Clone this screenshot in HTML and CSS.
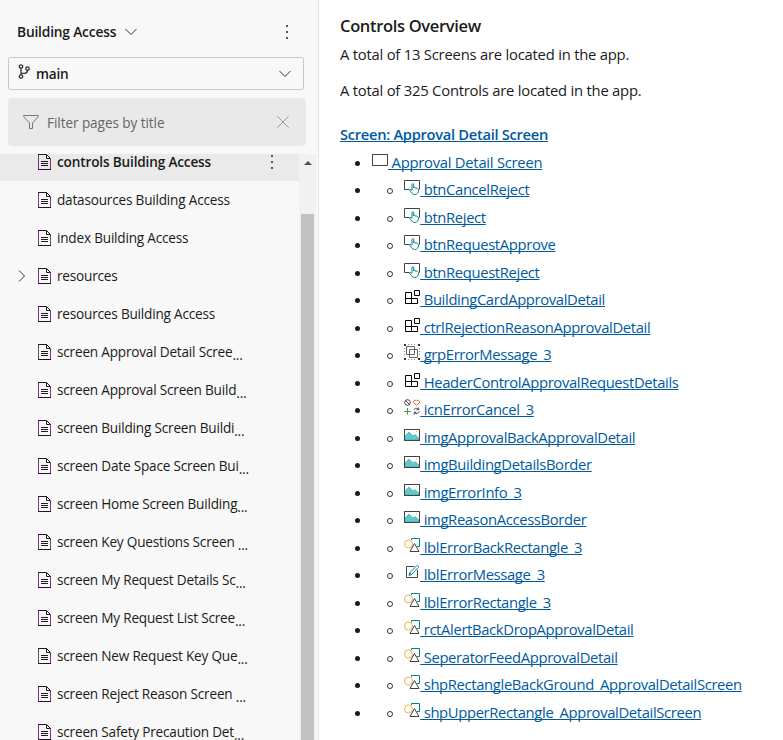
FILE: index.html
```html
<!DOCTYPE html>
<html lang="en">
<head>
<meta charset="utf-8">
<title>Controls Overview</title>
<link rel="stylesheet" href="styles.css">
</head>
<body>
<svg class="defs" aria-hidden="true">
  <symbol id="doc" viewBox="0 0 14 16"><path class="doc-edge" d="M1.500 .5V15.500M13.500 5V15.500"/><path class="doc-line" d="M1 .5H9.500L13.500 4.500H9.500V.5M1 15.500H14M4 7.500H11M4 9.500H11M4 11.500H11"/></symbol>
  <symbol id="chevron" viewBox="0 0 12 8"><path d="M.5 1L6 6.500L11.500 1"/></symbol>
  <symbol id="screen" viewBox="0 0 16 16"><path class="ink" d="M.5 2.500H15.500V13.500H.5Z"/></symbol>
  <symbol id="button" viewBox="0 0 16 16"><path class="ink" d="M5.500 10.500H.5V1.500H15.500V10.500"/><path class="teal" fill="#fff" d="M8 11V5.600C8 4.300 9.700 4.300 9.700 5.600V9V8.500C10.500 8 11.500 8.300 11.500 9.200C12.300 8.600 13.300 9 13.300 9.800C14 9.500 14.700 9.900 14.600 10.700C14.500 13.500 13.400 15.500 10.700 15.500C8.300 15.500 7.300 13.500 5.700 11.300C5.300 10.500 6.600 9.800 8 11.500"/></symbol>
  <symbol id="component" viewBox="0 0 16 16"><path class="black" d="M1.500 3.500H7.500V9.500H13.500V14.500H1.500ZM1.500 9.500H7.500V14.500M10.500 1.500H15.500V6.500H10.500Z"/></symbol>
  <symbol id="group" viewBox="0 0 16 16"><path class="gray" d="M2.500 2.500H10.500V10.500H2.500ZM5.500 5.500H13.500V13.500H5.500Z"/><path class="dots" d="M.5 4V13M15.500 4V13M4 .5H13M4 15.500H13"/><path class="solid" d="M0 0H2V2H0ZM14 0H16V2H14ZM0 14H2V16H0ZM14 14H16V16H14Z"/></symbol>
  <symbol id="icons" viewBox="0 0 16 16"><circle class="ink" cx="3.500" cy="3.500" r="2.800"/><path class="ink" d="M1.500 1.500L5.500 5.500M10 11C10.500 9 13.500 8.500 14.700 10.500V8.500M14.700 10.700H12.500M15.300 12.500C14.500 15 11.500 15.300 10.300 13.300V15.500M10.300 13.200H12.500"/><path class="red" d="M12.500 6.400L9.600 3.500C8.900 1.600 11.200.3 12.500 2.100C13.800.3 16.100 1.600 15.400 3.500Z"/><path class="green" d="M3.500 9V15.500M.3 12.500H6.800"/></symbol>
  <symbol id="image" viewBox="0 0 16 16"><path fill="#fff" d="M.5 2.500H15.500V13.500H.5Z"/><path class="hills" d="M1 9L5 5L9 9L11 7.500L15 11V13H1Z"/><path class="sun" d="M12 4H13V5H12Z"/><path class="ink" d="M.5 2.500H15.500V13.500H.5Z"/></symbol>
  <symbol id="shape" viewBox="0 0 16 16"><path class="teal" d="M7.500 3V1.500H15.500V9.500H13"/><circle class="orange" cx="4.500" cy="7" r="4"/><path class="ink" fill="#fff" d="M10.500 6.500L15 14.500H6Z"/></symbol>
  <symbol id="label" viewBox="0 0 16 16"><path class="ink" d="M10 2.500H2.500V13.500H13.500V6"/><path class="teal" fill="#fff" d="M5 11.500L5.700 8.800L12.800 1.600C13.700.9 15.300 2.300 14.500 3.300L7.500 10.500ZM6 9L7.300 10.300"/></symbol>
</svg>

<div class="app">
  <aside class="sidebar">
    <header class="wiki">
      <span class="wiki-name">Building Access</span>
      <svg class="chevron"><use href="#chevron"/></svg>
      <span class="more"><i></i><i></i><i></i></span>
    </header>
    <div class="branch">
      <svg class="branch-icon" viewBox="0 0 12 15"><circle cx="3" cy="2.500" r="1.700"/><circle cx="3" cy="12.500" r="1.700"/><circle cx="9.500" cy="4.500" r="1.700"/><path d="M3 4.200V10.800M3 9.300H6.500C8.500 9.300 9.500 8.500 9.500 6.200"/></svg>
      <span class="branch-name">main</span>
      <svg class="chevron"><use href="#chevron"/></svg>
    </div>
    <div class="filter">
      <svg class="funnel" viewBox="0 0 16 15"><path d="M.7.500H15.300V1.800L9.500 8V13.500H6.500V8L.7 1.800Z"/></svg>
      <span class="filter-text">Filter pages by title</span>
      <svg class="clear" viewBox="0 0 12 12"><path d="M.3.300L11.700 11.700M11.700.300L.3 11.700"/></svg>
    </div>
    <div class="tree">
      <ul class="pages">
        <li class="page active"><svg class="doc"><use href="#doc"/></svg><span class="title">controls Building Access</span><span class="more"><i></i><i></i><i></i></span></li>
        <li class="page"><svg class="doc"><use href="#doc"/></svg><span class="title">datasources Building Access</span></li>
        <li class="page"><svg class="doc"><use href="#doc"/></svg><span class="title">index Building Access</span></li>
        <li class="page parent"><svg class="expand" viewBox="0 0 8 12"><path d="M1 .5L6.500 6L1 11.500"/></svg><svg class="doc"><use href="#doc"/></svg><span class="title">resources</span></li>
        <li class="page"><svg class="doc"><use href="#doc"/></svg><span class="title">resources Building Access</span></li>
        <li class="page"><svg class="doc"><use href="#doc"/></svg><span class="title">screen Approval Detail Scree<span class="cut">...</span></span></li>
        <li class="page"><svg class="doc"><use href="#doc"/></svg><span class="title">screen Approval Screen Build<span class="cut">...</span></span></li>
        <li class="page"><svg class="doc"><use href="#doc"/></svg><span class="title">screen Building Screen Buildi<span class="cut">...</span></span></li>
        <li class="page"><svg class="doc"><use href="#doc"/></svg><span class="title">screen Date Space Screen Bui<span class="cut">...</span></span></li>
        <li class="page"><svg class="doc"><use href="#doc"/></svg><span class="title">screen Home Screen Building<span class="cut">...</span></span></li>
        <li class="page"><svg class="doc"><use href="#doc"/></svg><span class="title">screen Key Questions Screen <span class="cut">...</span></span></li>
        <li class="page"><svg class="doc"><use href="#doc"/></svg><span class="title">screen My Request Details Sc<span class="cut">...</span></span></li>
        <li class="page"><svg class="doc"><use href="#doc"/></svg><span class="title">screen My Request List Scree<span class="cut">...</span></span></li>
        <li class="page"><svg class="doc"><use href="#doc"/></svg><span class="title">screen New Request Key Que<span class="cut">...</span></span></li>
        <li class="page"><svg class="doc"><use href="#doc"/></svg><span class="title">screen Reject Reason Screen <span class="cut">...</span></span></li>
        <li class="page"><svg class="doc"><use href="#doc"/></svg><span class="title">screen Safety Precaution Det<span class="cut">...</span></span></li>
      </ul>
      <div class="scrollbar"><svg class="up" viewBox="0 0 8 4"><path d="M0 4L4 0L8 4Z"/></svg><div class="thumb"></div></div>
    </div>
  </aside>

  <main class="content">
    <h1>Controls Overview</h1>
    <p>A total of 13 Screens are located in the app.</p>
    <p>A total of 325 Controls are located in the app.</p>
    <h2><a>Screen: Approval Detail Screen</a></h2>
    <ul class="controls">
      <li class="root"><a><svg><use href="#screen"/></svg> Approval Detail Screen</a></li>
      <li class="sub"><a><svg><use href="#button"/></svg> btnCancelReject</a></li>
      <li class="sub"><a><svg><use href="#button"/></svg> btnReject</a></li>
      <li class="sub"><a><svg><use href="#button"/></svg> btnRequestApprove</a></li>
      <li class="sub"><a><svg><use href="#button"/></svg> btnRequestReject</a></li>
      <li class="sub"><a><svg><use href="#component"/></svg> BuildingCardApprovalDetail</a></li>
      <li class="sub"><a><svg><use href="#component"/></svg> ctrlRejectionReasonApprovalDetail</a></li>
      <li class="sub"><a><svg><use href="#group"/></svg> grpErrorMessage_3</a></li>
      <li class="sub"><a><svg><use href="#component"/></svg> HeaderControlApprovalRequestDetails</a></li>
      <li class="sub"><a><svg><use href="#icons"/></svg> icnErrorCancel_3</a></li>
      <li class="sub"><a><svg><use href="#image"/></svg> imgApprovalBackApprovalDetail</a></li>
      <li class="sub"><a><svg><use href="#image"/></svg> imgBuildingDetailsBorder</a></li>
      <li class="sub"><a><svg><use href="#image"/></svg> imgErrorInfo_3</a></li>
      <li class="sub"><a><svg><use href="#image"/></svg> imgReasonAccessBorder</a></li>
      <li class="sub"><a><svg><use href="#shape"/></svg> lblErrorBackRectangle_3</a></li>
      <li class="sub"><a><svg><use href="#label"/></svg> lblErrorMessage_3</a></li>
      <li class="sub"><a><svg><use href="#shape"/></svg> lblErrorRectangle_3</a></li>
      <li class="sub"><a><svg><use href="#shape"/></svg> rctAlertBackDropApprovalDetail</a></li>
      <li class="sub"><a><svg><use href="#shape"/></svg> SeperatorFeedApprovalDetail</a></li>
      <li class="sub"><a><svg><use href="#shape"/></svg> shpRectangleBackGround_ApprovalDetailScreen</a></li>
      <li class="sub"><a><svg><use href="#shape"/></svg> shpUpperRectangle_ApprovalDetailScreen</a></li>
    </ul>
  </main>
</div>
</body>
</html>
```
FILE: styles.css
```css
*, *::before, *::after { box-sizing: border-box; }
body {
  margin: 0;
  font-family: "Open Sans", "Noto Sans", sans-serif;
  color: #1b1b1b;
  background: #fff;
}
svg { fill: none; stroke: #333; flex: none; }
ul { list-style: none; margin: 0; padding: 0; }
.defs { display: none; }
.app { display: flex; height: 740px; overflow: hidden; }

/* Sidebar */
.sidebar {
  width: 319px;
  flex: none;
  display: flex;
  flex-direction: column;
  background: #f8f8f8;
  border-right: 1px solid #e3e3e3;
  font-size: 13.6px;
  letter-spacing: -0.2px;
}
.wiki { display: flex; align-items: center; height: 57px; padding: 7px 30px 0 17px; }
.wiki-name { font-size: 13.8px; font-weight: 600; margin-right: 9px; padding-bottom: 1px; }
.chevron { width: 12px; height: 8px; }
.more { display: flex; flex-direction: column; gap: 4px; margin-left: auto; }
.more i { width: 2px; height: 2px; background: #555; }
.branch {
  display: flex;
  align-items: center;
  width: 296px;
  height: 33px;
  margin-left: 8px;
  padding: 0 12px 0 9px;
  border: 1px solid #c8c8c8;
  border-radius: 2px;
}
.branch-icon { width: 12px; height: 15px; margin: -4px 6px 0 0; stroke-width: 1.3; }
.branch-name { font-weight: 600; margin-right: auto; }
.filter {
  display: flex;
  align-items: center;
  width: 298px;
  height: 48px;
  margin: 8px 0 8px 8px;
  padding: 0 17px 0 15px;
  border-radius: 4px;
  background: #e9e9e9;
  color: #666;
}
.funnel { width: 16px; height: 15px; margin-right: 8px; stroke: #777; }
.filter-text { margin-right: auto; letter-spacing: -0.08px; }
.clear { width: 12px; height: 12px; stroke: #999; }
.tree { display: flex; flex: 1; min-height: 0; overflow: hidden; }
.pages { width: 299px; margin-top: -11px; }
.page { display: flex; align-items: center; height: 38px; padding-left: 37px; white-space: pre; }
.page.active { background: #eaeaea; font-weight: 600; letter-spacing: -0.16px; }
.page.parent { padding-left: 18px; }
.title { padding-bottom: 1px; }
.page .more { margin-right: 26px; }
.expand { width: 8px; height: 12px; margin-right: 11px; }
.doc { width: 14px; height: 16px; margin-right: 6px; }
.doc-line { stroke: #1b1b1b; }
.doc-edge { stroke: #80308a; }
.cut { position: relative; top: 3px; letter-spacing: -0.2px; }
.scrollbar { width: 17px; background: #f1f1f1; padding: 7px 2px 0; display: flex; flex-direction: column; align-items: center; }
.up { width: 8px; height: 4px; fill: #505050; stroke: none; }
.thumb { width: 13px; flex: 1; margin-top: 49px; background: #c1c1c1; }

/* Page content */
.content { padding: 13.600px 0 0 21px; font-size: 14.8px; letter-spacing: -0.22px; }
h1 { margin: 0 0 4px; font-size: 16.5px; line-height: 24px; font-weight: 600; letter-spacing: -0.33px; }
p { margin: 0 0 12px; line-height: 24px; }
h2 { margin: 20px 0 3px; font-size: 14.7px; line-height: 24px; font-weight: 600; letter-spacing: -0.3px; }
a {
  color: #005a9e;
  text-decoration: underline;
  text-decoration-thickness: 1px;
  text-underline-offset: 1px;
  text-decoration-skip-ink: none;
}
.controls { letter-spacing: -0.35px; }
.controls li { display: flex; height: 27.5px; line-height: 27.5px; white-space: nowrap; }
.controls li::before { content: ""; width: 5px; height: 5px; margin: 12px 12px 0 15px; border-radius: 50%; background: #1b1b1b; }
.controls .root { letter-spacing: -0.26px; }
.controls .sub::after { content: ""; width: 6px; height: 6px; margin: 12px 11.500px 0 14.500px; border: 1px solid #333; border-radius: 50%; }
.controls .sub a { order: 1; }
.controls svg { width: 16px; height: 16px; vertical-align: baseline; }
.controls .sub svg { margin-right: 0.200px; }
.ink { stroke: #424242; }
.teal { stroke: #038387; }
.black { stroke: #000; }
.gray { stroke: #666; }
.dots { stroke: #888; stroke-dasharray: 1 2; }
.solid { fill: #333; stroke: none; }
.red { stroke: #e8502f; }
.green { stroke: #2e9e3e; }
.orange { stroke: #f2b04c; }
.hills { fill: #5fc9cb; stroke: #2b9a9c; stroke-width: 0.5; }
.sun { fill: #f2b04c; stroke: none; }
```
